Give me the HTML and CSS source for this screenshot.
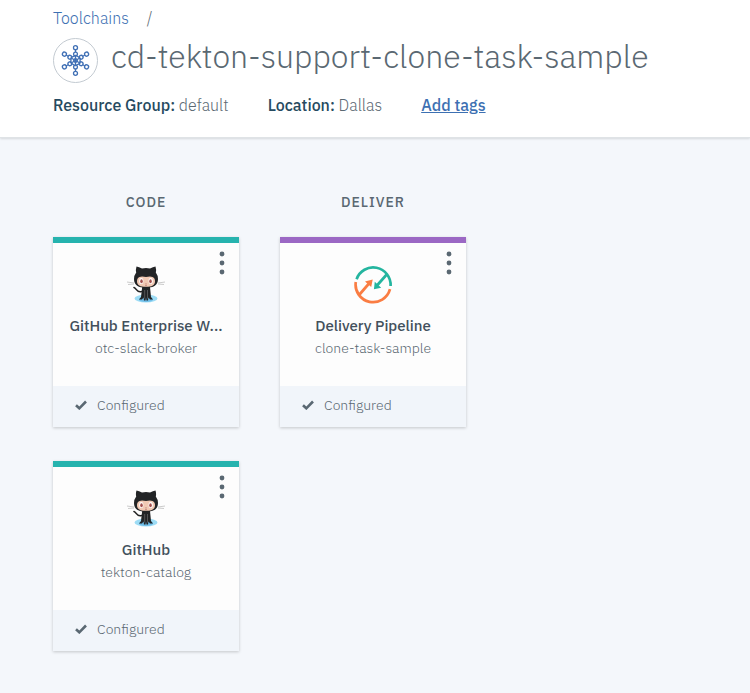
FILE: index.html
```html
<!DOCTYPE html>
<html lang="en">
<head>
<meta charset="utf-8">
<meta name="viewport" content="width=device-width, initial-scale=1">
<title>cd-tekton-support-clone-task-sample</title>
<link rel="stylesheet" href="styles.css">
</head>
<body>
<svg class="sprite" aria-hidden="true">
  <symbol id="octocat" viewBox="0 0 40 40">
    <ellipse cx="20" cy="34.5" rx="11.5" ry="4" fill="#9ddcf5"/>
    <ellipse cx="20" cy="35.5" rx="7" ry="2.4" fill="#6fbde8"/>
    <path d="M15.5 27.500c-5 1.500-5-3.500-7.500-4" fill="none" stroke="#222" stroke-width="1.600" stroke-linecap="round"/>
    <path d="M16.200 23h7.800l1 10 2 2.500h-3l-1.500-2-.5 3h-1.500l-.5-3-.5 3H18l-.5-3-1.500 2h-3l2-2.500z" fill="#222426"/>
    <path d="M18.700 26v8.500M21.500 26v8.500" stroke="#777" stroke-width=".6"/>
    <path d="M10.500 2.500Q13 2.900 16 4.600q4-1 8 0 3-1.700 5.500-2.100 1 3 .3 6.100Q32 11.500 32 15c0 6.500-4.500 8.700-12 8.700S8 21.500 8 15q0-3.500 2.200-6.400-.7-3.100.3-6.100z" fill="#222426"/>
    <path d="M13.500 13q2-.8 6.500 0 4.500-.8 6.500 0c2 1 2.500 2.500 2.500 4.200 0 4-3 5.600-9 5.600s-9-1.600-9-5.600c0-1.700.5-3.200 2.500-4.200z" fill="#f1c9b4"/>
    <ellipse cx="15.300" cy="17" rx="2.100" ry="2.900" fill="#fff"/>
    <ellipse cx="24.700" cy="17" rx="2.100" ry="2.900" fill="#fff"/>
    <ellipse cx="15.500" cy="17.200" rx="1.300" ry="2" fill="#a4504f"/>
    <ellipse cx="24.500" cy="17.200" rx="1.300" ry="2" fill="#a4504f"/>
    <path d="M19 21q1 .8 2 0M19.600 19.500h.8" fill="none" stroke="#a4504f" stroke-width=".6"/>
    <path d="M1 18l7 1M2 20.500l6-.5M39 18l-7 1M38 20.500l-6-.5" stroke="#b5b5b5" stroke-width=".7"/>
  </symbol>
  <symbol id="pipeline" viewBox="0 0 40 40">
    <g fill="none" stroke-width="2.700">
      <path d="M3.600 15.200A17.500 17.500 0 0 1 37.600 22M33.700 10.500L24 21.500" stroke="#24b59f"/>
      <path d="M2.800 18A17.500 17.500 0 0 0 37 25.200M6.500 30.500L16 19.500" stroke="#fa7d43"/>
    </g>
    <path d="M21.800 17.700L28.200 23.700 20.900 25.300z" fill="#24b59f"/>
    <path d="M19.700 15.500L18.200 22.900 12 17.400z" fill="#fa7d43"/>
  </symbol>
  <symbol id="check" viewBox="0 0 12 10">
    <path d="M1 5.200L4.300 8.300 11 1.500" fill="none" stroke="#5a6872" stroke-width="2.600"/>
  </symbol>
  <symbol id="dots" viewBox="0 0 6 24">
    <circle cx="3" cy="3" r="2.400"/><circle cx="3" cy="12" r="2.400"/><circle cx="3" cy="21" r="2.400"/>
  </symbol>
</svg>

<header class="header">
  <nav class="crumbs" aria-label="Breadcrumb"><a href="#">Toolchains</a><span>/</span></nav>
  <div class="heading">
    <svg class="badge" viewBox="-22.5 -22.5 45 45" aria-hidden="true">
      <circle r="22" fill="#fff" stroke="#c3cad1"/>
      <g fill="none" stroke="#4070b5" stroke-width="1.300">
        <g id="spoke"><path d="M0 0V-4.500M0-8.500v-2.500M0-5.500L4.500-2.500"/><circle cy="-6.500" r="1.900"/><circle cy="-12.800" r="2"/></g>
        <use href="#spoke" transform="rotate(60)"/>
        <use href="#spoke" transform="rotate(120)"/>
        <use href="#spoke" transform="rotate(180)"/>
        <use href="#spoke" transform="rotate(240)"/>
        <use href="#spoke" transform="rotate(300)"/>
        <circle r="1.800"/>
      </g>
    </svg>
    <h1>cd-tekton-support-clone-task-sample</h1>
  </div>
  <div class="meta">
    <span><b>Resource Group:</b> default</span>
    <span><b>Location:</b> Dallas</span>
    <a href="#">Add tags</a>
  </div>
</header>

<main class="board">
  <section class="column">
    <h2>CODE</h2>
    <article class="card code">
      <div class="body">
        <button class="menu" type="button" aria-label="Menu"><svg><use href="#dots"/></svg></button>
        <svg class="logo"><use href="#octocat"/></svg>
        <h3>GitHub Enterprise W...</h3>
        <p>otc-slack-broker</p>
      </div>
      <div class="status"><svg><use href="#check"/></svg>Configured</div>
    </article>
    <article class="card code">
      <div class="body">
        <button class="menu" type="button" aria-label="Menu"><svg><use href="#dots"/></svg></button>
        <svg class="logo"><use href="#octocat"/></svg>
        <h3>GitHub</h3>
        <p>tekton-catalog</p>
      </div>
      <div class="status"><svg><use href="#check"/></svg>Configured</div>
    </article>
  </section>
  <section class="column">
    <h2>DELIVER</h2>
    <article class="card deliver">
      <div class="body">
        <button class="menu" type="button" aria-label="Menu"><svg><use href="#dots"/></svg></button>
        <svg class="logo"><use href="#pipeline"/></svg>
        <h3>Delivery Pipeline</h3>
        <p>clone-task-sample</p>
      </div>
      <div class="status"><svg><use href="#check"/></svg>Configured</div>
    </article>
  </section>
</main>
</body>
</html>
```
FILE: styles.css
```css
* {
  box-sizing: border-box;
}

body {
  margin: 0;
  min-height: 100vh;
  background: #f4f7fb;
  color: #5a6872;
  font: 300 16px/20px "IBM Plex Sans", Roboto, sans-serif;
}

h1, h2, h3, p {
  margin: 0;
}

a {
  color: #3d70b2;
}

.sprite {
  position: absolute;
  width: 0;
  height: 0;
}

.header {
  padding: 8px 53px 22px;
  background: #fff;
  border-bottom: 1px solid #dfe3e6;
  box-shadow: 0 1px 2px rgba(0, 0, 0, 0.12);
}

.crumbs {
  display: flex;
  gap: 18px;
}

.crumbs a {
  text-decoration: none;
}

.heading {
  display: flex;
  align-items: center;
  gap: 13px;
  margin-top: 10px;
}

.badge {
  flex: none;
  width: 45px;
  height: 45px;
}

h1 {
  padding-bottom: 10px;
  font-size: 32px;
  line-height: 34px;
  font-weight: 300;
  white-space: nowrap;
}

.meta {
  display: flex;
  gap: 39px;
  margin-top: 12px;
}

.meta b {
  color: #264a60;
  font-weight: 500;
}

.meta a {
  font-weight: 500;
}

.board {
  display: flex;
  flex-wrap: wrap;
  gap: 41px;
  padding: 54px 53px 40px;
}

.column {
  display: flex;
  flex-direction: column;
  gap: 34px;
  width: 186px;
}

.column h2 {
  margin-bottom: -9px;
  font-size: 14px;
  font-weight: 500;
  letter-spacing: 1px;
  text-align: center;
}

.card {
  border-top: 6px solid #26b3ae;
  background: #fdfdfd;
  box-shadow: 0 1px 3px rgba(0, 0, 0, 0.2);
}

.card.deliver {
  border-top-color: #9b68c4;
}

.body {
  position: relative;
  display: flex;
  flex-direction: column;
  align-items: center;
  padding: 21px 8px 28px;
}

.menu {
  position: absolute;
  top: 8px;
  right: 14px;
  padding: 0;
  border: 0;
  background: none;
}

.menu svg {
  display: block;
  width: 6px;
  height: 24px;
  fill: #5a6872;
}

.logo {
  width: 40px;
  height: 40px;
}

.body h3 {
  margin-top: 12px;
  color: #42505c;
  font-size: 15px;
  font-weight: 500;
  white-space: nowrap;
}

.body p {
  margin-top: 2px;
  font-size: 14px;
}

.status {
  display: flex;
  align-items: center;
  gap: 10px;
  height: 41px;
  padding: 0 22px 3px;
  background: #f1f5fa;
  font-size: 14px;
}

.status svg {
  width: 12px;
  height: 10px;
}
```
